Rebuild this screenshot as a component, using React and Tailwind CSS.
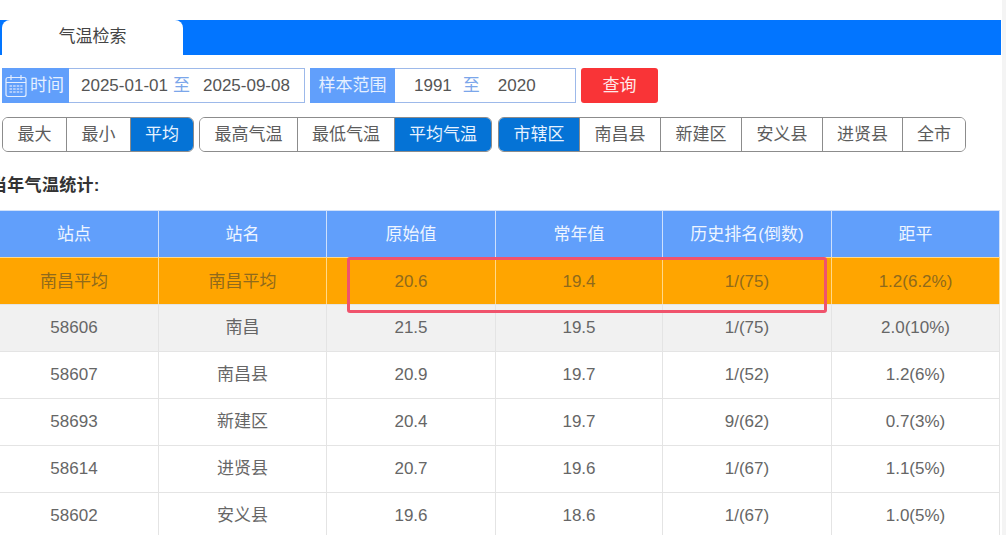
const FONT = "font-['Liberation_Sans','Noto_Sans_CJK_SC',sans-serif]";

function CalendarIcon() {
  return (
    <svg width="22" height="24" viewBox="0 0 22 24" fill="none" stroke="#e4eeff" strokeWidth="1.2" className="shrink-0">
      <rect x="1" y="3.5" width="20" height="19" rx="2" />
      <path d="M1 8.5h20M6 1v5M16 1v5" />
      <path d="M4.5 12h13M4.5 15h13M4.5 18h13" stroke="#c9dcfd" strokeWidth="1.4" strokeDasharray="2.6 1" />
    </svg>
  );
}

function Segment({ items, active, widths }) {
  return (
    <div className="flex h-[35px] rounded-[6px] border border-[#8c8c8c] overflow-hidden">
      {items.map((t, i) => (
        <div
          key={t}
          style={{ width: widths[i] }}
          className={`flex items-center justify-center shrink-0 ${i > 0 ? 'border-l border-[#8c8c8c]' : ''} ${t === active ? 'bg-[#0573d6] text-[#e6f2ff]' : 'bg-white text-[#5c5c5c]'}`}
        >
          {t}
        </div>
      ))}
    </div>
  );
}

const rows = [
  ['58606', '南昌', '21.5', '19.5', '1/(75)', '2.0(10%)'],
  ['58607', '南昌县', '20.9', '19.7', '1/(52)', '1.2(6%)'],
  ['58693', '新建区', '20.4', '19.7', '9/(62)', '0.7(3%)'],
  ['58614', '进贤县', '20.7', '19.6', '1/(67)', '1.1(5%)'],
  ['58602', '安义县', '19.6', '18.6', '1/(67)', '1.0(5%)'],
];

function Cell({ children, className = '' }) {
  return <div className={`flex items-center justify-center border-r ${className}`}>{children}</div>;
}

const GRID = 'grid grid-cols-[169px_168px_169px_167px_169px_168px] h-[47px]';

export default function App() {
  return (
    <div className={`${FONT} relative w-[1006px] h-[535px] overflow-hidden bg-white text-[17px] text-[#666666]`}>
      <div className="absolute right-0 top-0 h-full w-[4px] bg-[#f4f4f4]" />
      <div className="pt-[20px] w-[1001px]">
        <div className="h-[35px] bg-[#0275ff] pl-[2px] flex items-end">
          <div className="w-[181px] h-[35px] bg-white rounded-t-[8px] flex items-center justify-center text-[#444444] pb-[1px]">
            气温检索
          </div>
        </div>

        <div className="flex items-stretch h-[35px] mt-[13px] ml-[2px]">
          <div className="w-[67px] bg-[#619ffb] text-[#e6f0ff] flex items-center pl-[3px] gap-[3px]">
            <CalendarIcon />
            <span className="whitespace-nowrap">时间</span>
          </div>
          <div className="w-[236px] border border-[#9db9ea] border-l-0 flex items-center text-[#555555] whitespace-nowrap pl-[12px]">
            <span>2025-01-01</span>
            <span className="ml-[5px] text-[#7ba6ea]">至</span>
            <span className="ml-[13px]">2025-09-08</span>
          </div>
          <div className="ml-[5px] w-[85px] bg-[#619ffb] text-[#e6f0ff] flex items-center justify-center whitespace-nowrap">
            样本范围
          </div>
          <div className="w-[181px] border border-[#9db9ea] border-l-0 flex items-center text-[#555555] whitespace-nowrap pl-[19px]">
            <span>1991</span>
            <span className="ml-[11px] text-[#7ba6ea]">至</span>
            <span className="ml-[18px]">2020</span>
          </div>
          <div className="ml-[5px] w-[77px] bg-[#f93437] rounded-[3px] text-[#ffeaea] flex items-center justify-center">
            查询
          </div>
        </div>

        <div className="flex mt-[14px] ml-[2px]">
          <Segment items={['最大', '最小', '平均']} active="平均" widths={[63, 64, 63]} />
          <div className="ml-[5px]">
            <Segment items={['最高气温', '最低气温', '平均气温']} active="平均气温" widths={[97, 97, 97]} />
          </div>
          <div className="ml-[6px]">
            <Segment
              items={['市辖区', '南昌县', '新建区', '安义县', '进贤县', '全市']}
              active="市辖区"
              widths={[80, 81, 81, 81, 80, 63]}
            />
          </div>
        </div>

        <div className="mt-[23px] h-[22px] leading-[22px] font-bold text-[#333333] whitespace-nowrap -ml-[10px] tracking-[0.3px]">
          当年气温统计:
        </div>

        <div className="-ml-[10px] mt-[13px] w-[1010px]">
          <div className={`${GRID} bg-[#619ffb] text-[#eef5ff] border-t border-[#cfe0fa]`}>
            {['站点', '站名', '原始值', '常年值', '历史排名(倒数)', '距平'].map((t) => (
              <Cell key={t} className="border-[#cfe0fa] pt-[1px]">{t}</Cell>
            ))}
          </div>
          <div className={`${GRID} bg-[#ffa500] text-[#8f6a1c] border-t border-[#ffd98a]`}>
            {['南昌平均', '南昌平均', '20.6', '19.4', '1/(75)', '1.2(6.2%)'].map((t, i) => (
              <Cell key={i} className="border-[#ffd98a] pt-[1px]">{t}</Cell>
            ))}
          </div>
          {rows.map((r, ri) => (
            <div key={r[0]} className={`${GRID} border-t border-[#e4e4e4] ${ri === 0 ? 'bg-[#f1f1f1]' : 'bg-white'}`}>
              {r.map((t, i) => (
                <Cell key={i} className="border-[#e4e4e4]">{t}</Cell>
              ))}
            </div>
          ))}
        </div>
      </div>

      <div className="absolute left-[347px] top-[257px] w-[480px] h-[56px] border-[3px] border-[#f0536c] rounded-[3px]" />
    </div>
  );
}
